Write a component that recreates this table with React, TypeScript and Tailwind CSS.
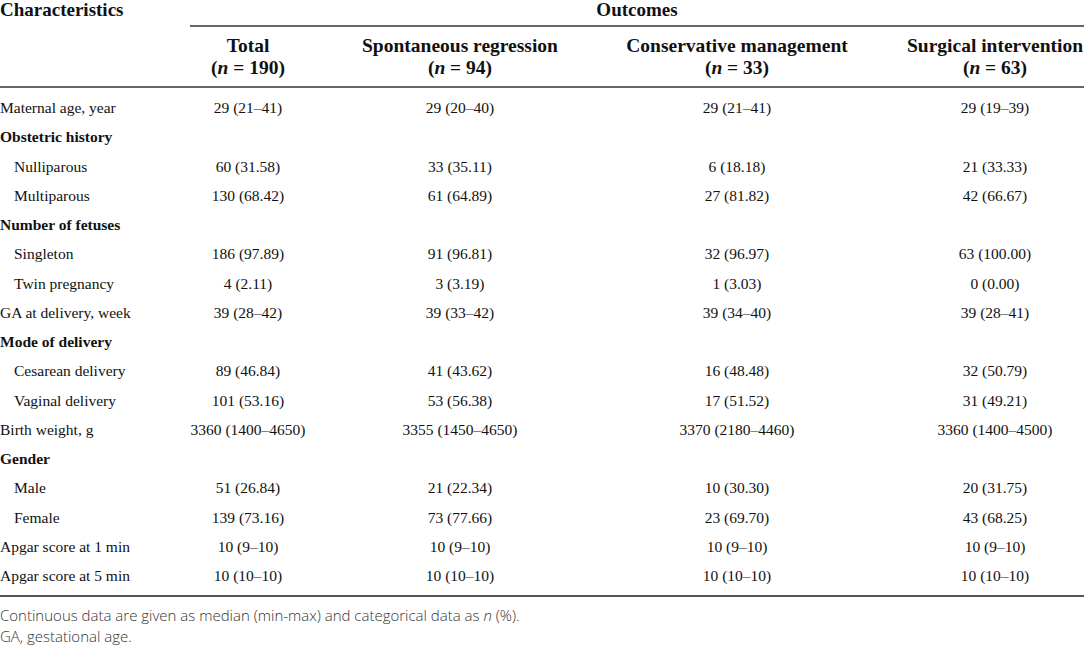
import React from "react";

type Row = {
	label: string;
	bold?: boolean;
	indent?: boolean;
	values?: string[];
};

const rows: Row[] = [
	{ label: "Maternal age, year", values: ["29 (21–41)", "29 (20–40)", "29 (21–41)", "29 (19–39)"] },
	{ label: "Obstetric history", bold: true },
	{ label: "Nulliparous", indent: true, values: ["60 (31.58)", "33 (35.11)", "6 (18.18)", "21 (33.33)"] },
	{ label: "Multiparous", indent: true, values: ["130 (68.42)", "61 (64.89)", "27 (81.82)", "42 (66.67)"] },
	{ label: "Number of fetuses", bold: true },
	{ label: "Singleton", indent: true, values: ["186 (97.89)", "91 (96.81)", "32 (96.97)", "63 (100.00)"] },
	{ label: "Twin pregnancy", indent: true, values: ["4 (2.11)", "3 (3.19)", "1 (3.03)", "0 (0.00)"] },
	{ label: "GA at delivery, week", values: ["39 (28–42)", "39 (33–42)", "39 (34–40)", "39 (28–41)"] },
	{ label: "Mode of delivery", bold: true },
	{ label: "Cesarean delivery", indent: true, values: ["89 (46.84)", "41 (43.62)", "16 (48.48)", "32 (50.79)"] },
	{ label: "Vaginal delivery", indent: true, values: ["101 (53.16)", "53 (56.38)", "17 (51.52)", "31 (49.21)"] },
	{ label: "Birth weight, g", values: ["3360 (1400–4650)", "3355 (1450–4650)", "3370 (2180–4460)", "3360 (1400–4500)"] },
	{ label: "Gender", bold: true },
	{ label: "Male", indent: true, values: ["51 (26.84)", "21 (22.34)", "10 (30.30)", "20 (31.75)"] },
	{ label: "Female", indent: true, values: ["139 (73.16)", "73 (77.66)", "23 (69.70)", "43 (68.25)"] },
	{ label: "Apgar score at 1 min", values: ["10 (9–10)", "10 (9–10)", "10 (9–10)", "10 (9–10)"] },
	{ label: "Apgar score at 5 min", values: ["10 (10–10)", "10 (10–10)", "10 (10–10)", "10 (10–10)"] },
];

const groups = [
	{ name: "Total", n: "190" },
	{ name: "Spontaneous regression", n: "94" },
	{ name: "Conservative management", n: "33" },
	{ name: "Surgical intervention", n: "63" },
];

// column template shared by header + body rows
const cols = "grid grid-cols-[190px_116px_308px_246px_1fr]";

function App() {
	return (
		<div className="w-[1084px] h-[645px] bg-white text-[#111] overflow-hidden font-['Liberation_Serif',serif]">
			{/* header */}
			<div className="flex h-[25px] items-start">
				<div className="w-[190px] text-[19px] font-bold leading-[20px]">Characteristics</div>
				<div className="flex-1 text-center text-[19px] font-bold leading-[20px]">Outcomes</div>
			</div>
			<div className="ml-[190px] h-[2px] bg-[#666]"></div>
			<div className={cols + " h-[59px] items-center"}>
				<div></div>
				{groups.map((g, i) => (
					<div key={i} className={"text-center text-[19.5px] font-bold leading-[22px] " + (i === 3 ? "pl-[46px]" : "")}>
						<div className="whitespace-nowrap">{g.name}</div>
						<div>
							(<i>n</i> = {g.n})
						</div>
					</div>
				))}
			</div>
			<div className="h-[2px] bg-[#666]"></div>

			{/* body */}
			<div className="pt-[5px] pb-[5px]">
				{rows.map((row, idx) => (
					<div key={idx} className={cols + " h-[29.25px] items-center text-[15.5px]"}>
						<div className={(row.bold ? "font-bold " : "") + (row.indent ? "pl-[14px]" : "") + " whitespace-nowrap"}>
							{row.label}
						</div>
						{(row.values ?? ["", "", "", ""]).map((v, i) => (
							<div key={i} className={"text-center whitespace-nowrap " + (i === 3 ? "pl-[46px]" : "")}>
								{v}
							</div>
						))}
					</div>
				))}
			</div>
			<div className="h-[2px] bg-[#555]"></div>

			{/* notes */}
			<div className="pt-[8px] text-[15px] leading-[21px] text-[#333] font-['Open_Sans',sans-serif] font-light">
				<div>
					Continuous data are given as median (min-max) and categorical data as <i>n</i> (%).
				</div>
				<div>GA, gestational age.</div>
			</div>
		</div>
	);
}

export default App;
